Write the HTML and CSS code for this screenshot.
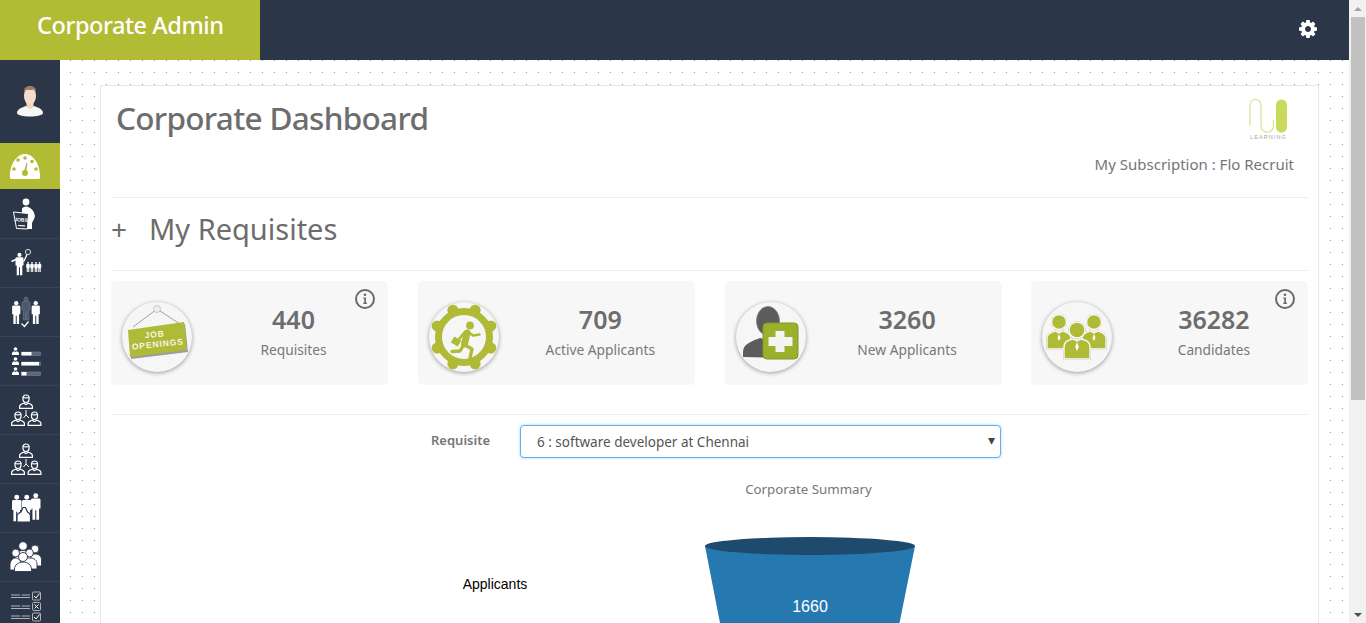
FILE: index.html
```html
<!DOCTYPE html>
<html lang="en">
<head>
<meta charset="utf-8">
<title>Corporate Dashboard</title>
<link rel="stylesheet" href="styles.css">
</head>
<body>
<svg class="defs" aria-hidden="true">
  <symbol id="bust" viewBox="0 0 16 16" overflow="visible">
    <circle cx="8" cy="4" r="3.6"/>
    <path d="M1 16v-3c0-3 3-4 4.500-4.500L8 10l2.500-1.500C12 9 15 10 15 13v3z"/>
  </symbol>
  <symbol id="outline" viewBox="0 0 14 15" overflow="visible">
    <g fill="none" stroke="#fff" stroke-width="1.2">
      <path d="M4 4c0-4 6-4 6 0v1.500c0 2-1.500 3-3 3s-3-1-3-3z"/>
      <path d="M.6 14.400v-1.900c0-2 2.400-2.600 4-3.300L7 10.500l2.400-1.300c1.600.7 4 1.300 4 3.300v1.900z"/>
      <path d="M3.500 3.500c2 .5 5 .5 7 0"/>
    </g>
  </symbol>
  <symbol id="man" viewBox="0 0 10 28" overflow="visible">
    <circle cx="5" cy="2.600" r="2.600"/>
    <path d="M0 7c0-1 1-1.500 2-1.500h6c1 0 2 .5 2 1.500v9H8.500v12H5.600V18H4.400v10H1.500V16H0z"/>
  </symbol>
</svg>
<div class="app">
  <div class="shell">
    <header class="topbar">
      <div class="brand">Corporate Admin</div>
      <svg class="gear" viewBox="128 128 1536 1536" width="18" height="18"><path fill="#fff" d="M1152 896q0-106-75-181t-181-75-181 75-75 181 75 181 181 75 181-75 75-181zm512-109v222q0 12-8 23t-20 13l-185 28q-19 54-39 91 35 50 107 138 10 12 10 25t-9 23q-27 37-99 108t-94 71q-12 0-26-9l-138-108q-44 23-91 38-16 136-29 186-7 28-36 28h-222q-14 0-24.500-8.500t-11.500-21.500l-28-184q-49-16-90-37l-141 107q-10 9-25 9-14 0-25-11-126-114-165-168-7-10-7-23 0-12 8-23 15-21 51-66.500t54-70.500q-27-50-41-99l-183-27q-13-2-21-12.500t-8-23.500v-222q0-12 8-23t19-13l186-28q14-46 39-92-40-57-107-138-10-12-10-24 0-10 9-23 26-36 98.500-107.500t94.500-71.500q13 0 26 10l138 107q44-23 91-38 16-136 29-186 7-28 36-28h222q14 0 24.500 8.500t11.500 21.500l28 184q49 16 90 37l142-107q9-9 24-9 13 0 25 10 129 119 165 170 7 8 7 22 0 12-8 23-15 21-51 66.500t-54 70.500q26 50 41 98l183 28q13 2 21 12.500t8 23.500z"/></svg>
    </header>
    <div class="body-row">
      <nav class="sidebar">
        <div class="side-profile">
          <svg viewBox="0 0 60 83" width="60" height="83">
            <path fill="#f6f6f4" d="M17 53c0-4 5-5.500 9-7l4 2 4-2c4 1.500 9 3 9 7 0 2-6 3.500-13 3.500S17 55 17 53z"/>
            <path fill="#eed6c2" d="M26.500 42h7v5l-3.500 2-3.500-2z"/>
            <ellipse cx="30" cy="36" rx="6" ry="9" fill="#f4dcc8"/>
            <path fill="#9a7f63" d="M24 33c-.5-5 2-7 6-7s6.500 2 6 7c-.5-1.500-1-2.500-2-3.500-2.500.8-5.500.8-8 0-1 1-1.500 2-2 3.500z"/>
          </svg>
        </div>
        <div class="side-active">
          <svg viewBox="0 0 60 46" width="60" height="46">
            <path fill="#fff" d="M11.500 36c-1 0-1.500-.6-1.500-1.500C9.500 21 17 11 25 11s15.500 10 15 23.500c0 .9-.5 1.500-1.500 1.500z"/>
            <g fill="#b1bb33"><circle cx="14" cy="26" r="1.800"/><circle cx="18" cy="17" r="1.800"/><circle cx="25" cy="15" r="1.800"/><circle cx="32" cy="18.500" r="1.800"/><circle cx="36" cy="26" r="1.800"/><circle cx="25" cy="30" r="3"/></g>
            <path d="M23.500 29.500l3-9.500 1 .3-1.500 9.700z" fill="#b1bb33"/>
          </svg>
        </div>
        <div class="side-item">
          <svg viewBox="0 0 60 48" width="60" height="48">
            <circle cx="26" cy="13" r="3.400" fill="#fff"/>
            <path d="M22 20c0-1.500 2.500-2.500 4-2.500s4 1 6 3c2.500 3 3.500 6.500 2.500 8.500L32 34v6H22z" fill="#fff"/>
            <path d="M13.500 23l15 1.500-1 15.500-11-.5z" fill="#2c3649" stroke="#fff" stroke-width="1"/>
            <text x="21" y="32.500" class="tiny-jobs" transform="rotate(5 21 32)">JOBS</text>
            <path d="M18 36.500l7 .3" stroke="#fff" stroke-width="1.200"/>
          </svg>
        </div>
        <div class="side-item">
          <svg viewBox="0 0 60 48" width="60" height="48">
            <circle cx="28" cy="14" r="2.600" fill="none" stroke="#d8dbe0" stroke-width="1"/>
            <path d="M27 16.500L24 23l-3 1" stroke="#fff" stroke-width="1.300" fill="none"/>
            <use href="#man" x="15.500" y="13" width="8" height="26" fill="#fff"/>
            <path d="M17 21l-5.500 2.500" stroke="#fff" stroke-width="1.700"/>
            <g fill="#fff">
              <use href="#man" x="26" y="24" width="4" height="10"/>
              <use href="#man" x="30" y="24" width="4" height="10"/>
              <use href="#man" x="34" y="24" width="4" height="10"/>
              <use href="#man" x="37.500" y="24" width="4" height="10"/>
            </g>
          </svg>
        </div>
        <div class="side-item">
          <svg viewBox="0 0 60 48" width="60" height="48">
            <use href="#man" x="21.500" y="10" width="9" height="23" fill="#4d586c" stroke="#8a93a3" stroke-width=".5"/>
            <use href="#man" x="12" y="14" width="8.500" height="23" fill="#fff"/>
            <use href="#man" x="31.500" y="14" width="8.500" height="23" fill="#fff"/>
            <path d="M21.500 36.500l3 3 4-5" fill="none" stroke="#fff" stroke-width="1.300"/>
          </svg>
        </div>
        <div class="side-item">
          <svg viewBox="0 0 60 48" width="60" height="48">
            <g fill="#fff">
              <use href="#bust" x="11.500" y="10" width="8" height="10"/>
              <use href="#bust" x="11.500" y="20" width="8" height="10"/>
              <use href="#bust" x="11.500" y="30" width="8" height="10"/>
            </g>
            <g fill="#5d6779" stroke="#7c8594" stroke-width=".6"><rect x="21.500" y="16" width="19" height="3.400"/><rect x="21.500" y="26" width="19" height="3.400"/><rect x="21.500" y="36" width="19" height="3.400"/></g>
            <g fill="#fff"><rect x="21.500" y="16" width="10" height="3.400"/><rect x="21.500" y="26" width="17.500" height="3.400"/><rect x="21.500" y="36" width="5" height="3.400"/></g>
          </svg>
        </div>
        <div class="side-item">
          <svg viewBox="0 0 60 48" width="60" height="48">
            <use href="#outline" x="19" y="9" width="14" height="15"/>
            <use href="#outline" x="11" y="26" width="14" height="15"/>
            <use href="#outline" x="27.500" y="26" width="14" height="15"/>
            <path d="M26 25v5m0 0l-2.500 3M26 30l3 3" stroke="#fff" stroke-width="1" fill="none"/>
          </svg>
        </div>
        <div class="side-item">
          <svg viewBox="0 0 60 48" width="60" height="48">
            <use href="#outline" x="19" y="9" width="14" height="15"/>
            <use href="#outline" x="11" y="26" width="14" height="15"/>
            <use href="#outline" x="27.500" y="26" width="14" height="15"/>
            <path d="M26 25v5m0 0l-2.500 3M26 30l3 3" stroke="#fff" stroke-width="1" fill="none"/>
          </svg>
        </div>
        <div class="side-item">
          <svg viewBox="0 0 60 48" width="60" height="48">
            <use href="#man" x="12" y="10" width="9.500" height="30" fill="#fff"/>
            <use href="#man" x="22" y="10" width="9.500" height="30" fill="#fff"/>
            <use href="#man" x="31" y="10" width="9.500" height="27" fill="#fff"/>
            <path d="M17 39v-6c0-2 2-3 4-4l2-4.500h2.500l2 4.500c2 1 3 2 3 4v6z" fill="#fff" stroke="#2c3649" stroke-width="1.200"/>
          </svg>
        </div>
        <div class="side-item">
          <svg viewBox="0 0 60 48" width="60" height="48">
            <g fill="#fff" stroke="#2c3649" stroke-width=".9">
              <circle cx="35" cy="17" r="3.900"/><path d="M28 34v-6c0-4 3.500-6 7-6s6.500 2 6.500 6v6z"/>
              <circle cx="23" cy="14" r="4.300"/><path d="M15 30v-5c0-4 4-6.500 8-6.500s8 2.500 8 6.500v5z"/>
              <circle cx="15.700" cy="21" r="3.900"/><path d="M10 38v-5c0-4 2.500-7 5.500-7s6 3 6 7v5z"/>
              <circle cx="29.500" cy="21" r="3.900"/><path d="M23 37v-5c0-4 3-6 7-6s7 2 7 6v5z"/>
              <circle cx="23" cy="25" r="4.500"/><path d="M14.500 39.500v-2.500c0-4 4-7 8.500-7s8.500 3 8.500 7v2.500z"/>
            </g>
          </svg>
        </div>
        <div class="side-item side-last">
          <svg viewBox="0 0 60 42" width="60" height="42">
            <g stroke="#aeb3bc" stroke-width="1" fill="none">
              <path d="M11 14h9m1.500 0H30M11 16.500h19M11 25h9m1.500 0H30M11 27.500h19M11 35h9m1.500 0H30M11 37.500h19"/>
              <rect x="32.500" y="11" width="8" height="8" rx="1"/>
              <rect x="32.500" y="21.500" width="8" height="8" rx="1"/>
              <rect x="32.500" y="32" width="8" height="8" rx="1"/>
            </g>
            <path d="M34 15l2 2 3.500-4.500M34 36l2 2 3.500-4.500M34.500 23.500l4 4m0-4l-4 4" stroke="#fff" stroke-width="1" fill="none"/>
          </svg>
        </div>
      </nav>
      <main class="content">
        <section class="panel">
          <div class="panel-head">
            <h1 class="title">Corporate Dashboard</h1>
            <div class="head-right">
              <svg class="logo" viewBox="0 0 40 42" width="40" height="42">
                <path d="M1 27V6a5.500 5.500 0 0 1 11 0v21a6.200 6.200 0 0 0 12.400 0v-6" fill="none" stroke="#d6e08a" stroke-width="1.100"/>
                <rect x="27" y="0.500" width="11" height="33" rx="5.500" fill="#c9da5b"/>
                <text x="1" y="40" class="logo-text">LEARNING</text>
              </svg>
              <p class="subscription">My Subscription : Flo Recruit</p>
            </div>
          </div>
          <div class="section-head">
            <span class="plus">+</span>
            <h2 class="section-title">My Requisites</h2>
          </div>
          <div class="stats">
            <article class="stat">
              <div class="stat-icon-col">
                <div class="circle">
                  <svg viewBox="0 0 70 70" width="70" height="70">
                    <path d="M11 25L35 7l23 15" fill="none" stroke="#8a8a8a" stroke-width=".8"/>
                    <circle cx="35" cy="7" r="3.500" fill="#eee" stroke="#bbb" stroke-width=".8"/>
                    <path d="M7 30l56-8 3 28-57 7z" fill="#9c9c9c"/>
                    <path d="M6 28l56-8 3 28-57 7z" fill="#afba36"/>
                    <g transform="rotate(-6 35 35)" class="sign-text">
                      <text x="33" y="35" text-anchor="middle">JOB</text>
                      <text x="35" y="45" text-anchor="middle">OPENINGS</text>
                    </g>
                  </svg>
                </div>
              </div>
              <div class="stat-text"><div class="stat-num">440</div><div class="stat-label">Requisites</div></div>
              <svg class="info" viewBox="0 0 20 20" width="20" height="20"><circle cx="10" cy="10" r="9" fill="none" stroke="#6a6a6a" stroke-width="2"/><circle cx="10" cy="5.800" r="1.300" fill="#6a6a6a"/><path d="M8.300 8.500H11v5.300h1v1.200H8.200v-1.200h1.100V9.700h-1z" fill="#6a6a6a"/></svg>
            </article>
            <article class="stat">
              <div class="stat-icon-col">
                <div class="circle">
                  <svg viewBox="0 0 70 70" width="70" height="70">
                    <circle cx="35" cy="35" r="25.500" fill="none" stroke="#afba36" stroke-width="7"/>
                    <g fill="#afba36">
                      <circle cx="61.800" cy="46.100" r="5.500"/><circle cx="46.100" cy="61.800" r="5.500"/><circle cx="23.900" cy="61.800" r="5.500"/><circle cx="8.200" cy="46.100" r="5.500"/>
                      <circle cx="8.200" cy="23.900" r="5.500"/><circle cx="23.900" cy="8.200" r="5.500"/><circle cx="46.100" cy="8.200" r="5.500"/><circle cx="61.800" cy="23.900" r="5.500"/>
                      <circle cx="41" cy="23.500" r="3.900"/>
                      <rect x="23" y="36" width="8" height="7" transform="rotate(30 27 39.500)"/>
                    </g>
                    <g fill="none" stroke="#afba36" stroke-linejoin="round" stroke-linecap="round">
                      <path d="M38 31l-2.500 11" stroke-width="7"/>
                      <path d="M39 30l5 3.500 6.500-1M35 31l-5 6" stroke-width="2.600"/>
                      <path d="M36 43l7 4-2 9M34 44l-3 5-8 .5" stroke-width="3.400"/>
                    </g>
                  </svg>
                </div>
              </div>
              <div class="stat-text"><div class="stat-num">709</div><div class="stat-label">Active Applicants</div></div>
            </article>
            <article class="stat">
              <div class="stat-icon-col">
                <div class="circle">
                  <svg viewBox="0 0 70 70" width="70" height="70">
                    <ellipse cx="32" cy="19" rx="11.500" ry="14.500" fill="#5c5c5a" stroke="#7d7d7b" stroke-width=".8"/>
                    <path d="M7 55v-5c0-8 9-11 17-14l8 2 8-2 5 20z" fill="#5c5c5a"/>
                    <rect x="27" y="21" width="35" height="36" rx="4" fill="#9cb02c" stroke="#86962a" stroke-width="1"/>
                    <path d="M39.500 29h9v6h8v9h-8v6h-9v-6h-7v-9h7z" fill="#f4f4f0"/>
                  </svg>
                </div>
              </div>
              <div class="stat-text"><div class="stat-num">3260</div><div class="stat-label">New Applicants</div></div>
            </article>
            <article class="stat">
              <div class="stat-icon-col">
                <div class="circle">
                  <svg viewBox="0 0 70 70" width="70" height="70">
                    <g class="people" fill="#afba36" stroke="#fff" stroke-width="1.300">
                      <circle cx="17" cy="20" r="7.500"/>
                      <path d="M5 47V36c0-5 5-6 8-7l4 2 4-2c3 1 8 2 8 7v11z"/>
                      <circle cx="52" cy="20" r="7.500"/>
                      <path d="M40 47V36c0-5 5-6 8-7l4 2 4-2c3 1 8 2 8 7v11z"/>
                      <circle cx="35" cy="28" r="8"/>
                      <path d="M22 57V45c0-6 5-7 9-8l4 2 4-2c4 1 9 2 9 8v12z"/>
                    </g>
                    <g fill="#fff"><path d="M17 32l1.500 4-1.500 3-1.500-3zM52 32l1.500 4-1.500 3-1.500-3zM35 40l1.800 5-1.800 4-1.800-4z"/></g>
                  </svg>
                </div>
              </div>
              <div class="stat-text"><div class="stat-num">36282</div><div class="stat-label">Candidates</div></div>
              <svg class="info" viewBox="0 0 20 20" width="20" height="20"><circle cx="10" cy="10" r="9" fill="none" stroke="#6a6a6a" stroke-width="2"/><circle cx="10" cy="5.800" r="1.300" fill="#6a6a6a"/><path d="M8.300 8.500H11v5.300h1v1.200H8.200v-1.200h1.100V9.700h-1z" fill="#6a6a6a"/></svg>
            </article>
          </div>
          <div class="filter">
            <label class="filter-label" for="req">Requisite</label>
            <div class="select-wrap">
              <select class="select" id="req"><option>6 : software developer at Chennai</option></select>
            </div>
          </div>
          <div class="chart-title">Corporate Summary</div>
          <svg class="chart" viewBox="0 0 1197 130" width="1197" height="130">
            <path d="M594 47L609 124H788.500L804 47z" fill="#2678b0"/>
            <ellipse cx="699" cy="47" rx="105" ry="9" fill="#1d4a6d"/>
            <text x="384" y="90" text-anchor="middle" class="chart-label">Applicants</text>
            <text x="699" y="113" text-anchor="middle" class="chart-value">1660</text>
          </svg>
        </section>
      </main>
    </div>
  </div>
  <div class="scrollbar">
    <div class="sb-btn"><span class="sb-up"></span></div>
    <div class="sb-thumb"></div>
    <div class="sb-track"></div>
    <div class="sb-btn"><span class="sb-down"></span></div>
  </div>
</div>
</body>
</html>
```
FILE: styles.css
```css
* { box-sizing: border-box; }
html, body { margin: 0; padding: 0; height: 100%; overflow: hidden; }
body { font-family: "Noto Sans", "Open Sans", sans-serif; color: #6f6f6f; background: #fff; }
.defs { display: none; }
.app { display: flex; width: 1366px; height: 623px; overflow: hidden; }
.shell { flex: 1; min-width: 0; display: flex; flex-direction: column; }

.topbar { height: 60px; flex: none; background: #2c3649; display: flex; align-items: center; justify-content: space-between; padding-right: 32px; }
.brand { width: 260px; height: 60px; background: #b1bb33; color: #fff; font-size: 23.500px; font-weight: 500; padding: 7px 0 0 37px; line-height: 36px; letter-spacing: -.43px; }
.gear { display: block; margin-top: -2px; }

.body-row { flex: 1; min-height: 0; display: flex; }
.sidebar { width: 60px; flex: none; background: #2c3649; overflow: hidden; }
.side-profile { height: 83px; }
.side-profile svg, .side-item svg, .side-active svg { display: block; }
.side-active { height: 46px; background: #b1bb33; }
.side-item { height: 49px; }
.side-item + .side-item { border-top: 1px solid #38435a; }
.side-item + .side-item svg { margin-top: -1px; }
.side-item.side-last { height: 42px; }
.tiny-jobs { font: 700 5px "Liberation Sans", sans-serif; fill: #fff; text-anchor: middle; }

.content {
  flex: 1; min-width: 0; padding: 25px 30px 0 40px; overflow: hidden;
  background-color: #fff;
  background-image: radial-gradient(circle at 10.5px .5px, #9a9a9a .6px, transparent .9px);
  background-size: 12px 12px;
}
.panel { width: 1219px; height: 560px; background: #fff; border: 1px solid #e9e9e9; border-bottom: 0; padding: 0 10px; }

.panel-head { height: 112px; display: flex; justify-content: space-between; border-bottom: 1px solid #ececec; }
.title { margin: 0; padding: 11px 0 0 5px; font-size: 31.500px; line-height: 42px; font-weight: 500; letter-spacing: -.7px; color: #6d6d6d; }
.head-right { display: flex; flex-direction: column; align-items: flex-end; padding: 13px 14px 0 0; }
.logo { display: block; margin-right: 5px; }
.logo-text { font: 400 5.500px "Liberation Sans", sans-serif; letter-spacing: 1.100px; fill: #a8a8a8; }
.subscription { margin: 0; padding-top: 11px; font-size: 15px; line-height: 24px; color: #767676; }

.section-head { height: 73px; display: flex; align-items: center; padding-bottom: 10px; border-bottom: 1px solid #ececec; }
.plus { width: 38px; font-size: 28px; line-height: 36px; color: #6d6d6d; }
.section-title { margin: 0; font-size: 29px; line-height: 36px; font-weight: 400; color: #6d6d6d; }

.stats { display: grid; grid-template-columns: repeat(4, 277px); column-gap: 29.800px; padding: 10px 0 29px; border-bottom: 1px solid #ececec; }
.stat { position: relative; height: 104px; background: #f7f7f7; border-radius: 5px; display: grid; grid-template-columns: 88px 1fr; align-items: center; }
.stat-icon-col { padding: 8px 0 0 11px; }
.circle { width: 70px; height: 70px; border-radius: 50%; background: #f6f6f6; box-shadow: 0 1px 4px rgba(0,0,0,.38); }
.circle svg { display: block; }
.sign-text { font: 700 8.500px "Liberation Sans", sans-serif; letter-spacing: .9px; fill: #f5f5e8; }
.people { filter: drop-shadow(0 0 .7px #777); }
.stat-text { text-align: center; margin-top: -3px; }
.stat-num { font-size: 25px; line-height: 32px; font-weight: 600; color: #6d6d6d; }
.stat-label { font-size: 13.750px; line-height: 20px; margin-top: 5px; color: #777; }
.info { position: absolute; top: 8px; right: 13px; }

.filter { display: flex; align-items: flex-start; padding: 10px 0 0 320px; }
.filter-label { width: 89px; font-size: 13px; font-weight: 600; line-height: 30px; color: #777; }
.select-wrap { position: relative; width: 481px; height: 33px; }
.select-wrap::after { content: "\25BE"; position: absolute; right: 6px; top: 5px; font: 14px/20px "DejaVu Sans", sans-serif; color: #444; pointer-events: none; }
.select { appearance: none; width: 100%; height: 33px; padding: 1px 16px 0; background: #fff; border: 1px solid #66afe9; border-radius: 4px; box-shadow: 0 0 3px rgba(102,175,233,.6); font: 13.500px "Noto Sans", sans-serif; color: #555; }

.chart-title { margin-top: 21px; text-align: center; width: 1395px; font-size: 13.300px; line-height: 20px; color: #777; }
.chart { display: block; }
.chart-label { font: 14px "Liberation Sans", sans-serif; fill: #000; }
.chart-value { font: 16px "Liberation Sans", sans-serif; fill: #fff; }

.scrollbar { width: 17px; flex: none; background: #f1f1f1; display: flex; flex-direction: column; }
.sb-btn { height: 17px; flex: none; display: flex; align-items: center; justify-content: center; }
.sb-up { width: 0; height: 0; border: 4px solid transparent; border-top: 0; border-bottom: 4px solid #a3a3a3; }
.sb-down { width: 0; height: 0; border: 4px solid transparent; border-bottom: 0; border-top: 4px solid #505050; }
.sb-thumb { height: 383px; flex: none; margin: 0 1px 0 2px; background: #c1c1c1; }
.sb-track { flex: 1; }
```
